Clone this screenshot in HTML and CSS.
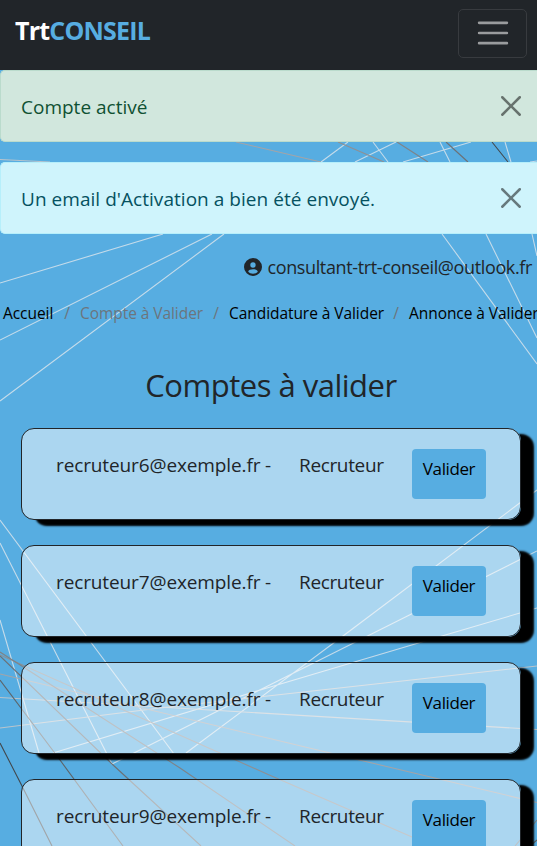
FILE: index.html
```html
<!DOCTYPE html>
<html lang="fr">
<head>
<meta charset="utf-8">
<title>TrtConseil</title>
<link rel="stylesheet" href="styles.css">
</head>
<body>
<svg class="backdrop" width="537" height="846" viewBox="0 0 537 846" aria-hidden="true">
  <g stroke="#c4dbea">
    <path d="M348 142L321 162M373 142L388 162M396 142L355 162M440 142L450 162M471 142L403 162M505 142L511 162M530 162L537 161"/>
    <path d="M163 234L0 283M212 234L0 340M224 234L0 401M442 234L537 364M486 234L537 338M532 234L537 256"/>
    <path d="M0 520L177 758M0 543L112 764L537 551M0 620L39 753M537 490L343 636L186 753M537 608L442 636L267 688L53 753"/>
  </g>
  <path stroke="#b9c4cc" d="M0 728L160 708L537 666M0 697.500L537 729.500M0 159.500L50 162"/>
  <path stroke="#a3a4a8" d="M236 142L270 150L321 162M0 674L537 802.500"/>
  <path stroke="#8e9094" d="M338 142L384 162M0 655L267 774L412 837L432 846"/>
  <path stroke="#7e8388" d="M397 142L428 162M0 652L70 697L180 768L295 846M537 820L515 846"/>
  <path stroke="#6c7176" d="M446 142L468 162M0 656L112 764L201 846"/>
  <path stroke="#5d6469" d="M0 680L60 760L123 846M537 840L530 846"/>
  <path stroke="#42484d" d="M492 142L508 162M0 743L22 786L52 846"/>
</svg>
<header class="navbar">
  <a class="brand">Trt<span>CONSEIL</span></a>
  <button class="toggler" aria-label="Menu">
    <svg width="38" height="38" viewBox="0 0 30 30"><path stroke="#fff" stroke-opacity=".55" stroke-linecap="round" stroke-miterlimit="10" stroke-width="2" d="M4 7h22M4 15h22M4 23h22"/></svg>
  </button>
</header>
<div class="alert success"><span class="msg-a">Compte activé</span>
  <svg class="close" width="20" height="20" viewBox="0 0 16 16"><path d="M.293.293a1 1 0 011.414 0L8 6.586 14.293.293a1 1 0 111.414 1.414L9.414 8l6.293 6.293a1 1 0 01-1.414 1.414L8 9.414l-6.293 6.293a1 1 0 01-1.414-1.414L6.586 8 .293 1.707a1 1 0 010-1.414z"/></svg>
</div>
<div class="alert info"><span class="msg-b">Un email d'Activation a bien été envoyé.</span>
  <svg class="close" width="20" height="20" viewBox="0 0 16 16"><path d="M.293.293a1 1 0 011.414 0L8 6.586 14.293.293a1 1 0 111.414 1.414L9.414 8l6.293 6.293a1 1 0 01-1.414 1.414L8 9.414l-6.293 6.293a1 1 0 01-1.414-1.414L6.586 8 .293 1.707a1 1 0 010-1.414z"/></svg>
</div>
<div class="user">
  <svg width="18" height="18" viewBox="0 0 18 18"><path fill="#212529" fill-rule="evenodd" d="M9 0a9 9 0 100 18A9 9 0 009 0zm0 4.300a2.700 2.700 0 110 5.400 2.700 2.700 0 010-5.400zM4.200 13.700c.3-1.700 2.500-2.400 4.800-2.400s4.500.7 4.800 2.400C12.700 15 11 15.700 9 15.700S5.300 15 4.200 13.700z"/></svg>
  <span>consultant-trt-conseil@outlook.fr</span>
</div>
<nav class="crumbs">
  <a class="c1">Accueil</a><i>/</i><a class="c2 current">Compte à Valider</a><i>/</i><a class="c3">Candidature à Valider</a><i>/</i><a class="c4">Annonce à Valider</a>
</nav>
<h1>Comptes à valider</h1>
<main class="list">
  <div class="card"><span class="mail">recruteur6@exemple.fr -</span><span class="role">Recruteur</span><button class="validate">Valider</button></div>
  <div class="card"><span class="mail">recruteur7@exemple.fr -</span><span class="role">Recruteur</span><button class="validate">Valider</button></div>
  <div class="card"><span class="mail">recruteur8@exemple.fr -</span><span class="role">Recruteur</span><button class="validate">Valider</button></div>
  <div class="card"><span class="mail">recruteur9@exemple.fr -</span><span class="role">Recruteur</span><button class="validate">Valider</button></div>
</main>
</body>
</html>
```
FILE: styles.css
```css
* { box-sizing: border-box; }
html { height: 100%; }
body {
  margin: 0;
  height: 846px;
  overflow: hidden;
  background: #57ade1;
  color: #212529;
  font: 19px/30px "Open Sans", "Noto Sans", sans-serif;
  white-space: nowrap;
}
button { font-family: inherit; padding: 0; }
.backdrop { position: absolute; top: 0; left: 0; z-index: -1; fill: none; stroke-width: 1.1; }
.navbar {
  display: flex;
  justify-content: space-between;
  height: 70px;
  padding: 9px 10px 0 15px;
  background: #212529;
}
.brand { padding-top: 3px; font-size: 25px; line-height: 36px; font-weight: 700; color: #fff; letter-spacing: -.8px; }
.brand span { color: #57ade1; }
.toggler {
  display: grid;
  place-items: center;
  width: 69px;
  height: 49px;
  padding-bottom: 1px;
  border: 1px solid #383b3f;
  border-radius: 5px;
  background: none;
}
.alert {
  display: flex;
  justify-content: space-between;
  height: 72px;
  padding: 21px 16px 0 20px;
  border: 1px solid;
  border-right: 0;
  border-radius: 5px 0 0 5px;
  margin-bottom: 20px;
}
.success { background: #d1e7dd; border-color: #badbcc; color: #0f5132; }
.info { background: #cff4fc; border-color: #b6effb; color: #055160; margin-bottom: 0; }
.msg-b { letter-spacing: .04px; }
.close { margin-top: 4px; fill: #000; opacity: .5; }
.user { display: flex; align-items: center; justify-content: flex-end; gap: 5px; height: 30px; margin: 18px 5px 0 0; font-size: 18px; letter-spacing: -.37px; }
.crumbs { display: flex; margin: 18px 0 0 3px; height: 26px; line-height: 26px; font-size: 15.500px; letter-spacing: -.06px; color: #000; }
.crumbs a { flex: none; }
.crumbs i { flex: none; width: 26px; text-align: center; font-style: normal; color: #6c757d; }
.crumbs .current { color: #6c757d; }
.c1 { width: 51px; }
.c2 { width: 123px; }
.c3 { width: 154px; }
h1 { margin: 39px 0 0 5px; height: 40px; font-size: 31px; line-height: 40px; font-weight: 400; letter-spacing: -.5px; text-align: center; }
.list { display: grid; gap: 25px; padding: 23px 16px 0 21px; }
.card {
  display: flex;
  height: 92px;
  padding: 20px 34px 0;
  border: 1px solid #212529;
  border-radius: 13px;
  background: rgba(255,255,255,.5);
  box-shadow: 13px 6px 2px #000;
}
.mail { width: 243px; padding-top: 1px; letter-spacing: -.12px; }
.role { width: 113px; padding-top: 1px; letter-spacing: -.35px; }
.validate {
  width: 74px;
  height: 50px;
  padding-bottom: 12px;
  border: 0;
  border-radius: 4px;
  background: #57ade1;
  color: #000;
  font-size: 17px;
  letter-spacing: -.4px;
}
```
